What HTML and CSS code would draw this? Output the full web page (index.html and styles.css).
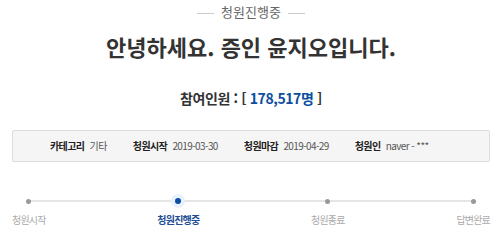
FILE: index.html
```html
<!DOCTYPE html>
<html lang="ko">
<head>
  <meta charset="UTF-8" />
  <meta name="viewport" content="width=device-width, initial-scale=1.0"/>
  <title>청원진행중</title>
  <link rel="stylesheet" href="styles.css">
</head>
<body>
  <div class="petition">
    <p class="status">청원진행중</p>
    <h1 class="title">안녕하세요. 증인 윤지오입니다.</h1>
    <p class="count">참여인원 : [ <span class="count-num">178,517명</span> ]</p>

    <ul class="info">
      <li><strong>카테고리</strong> 기타</li>
      <li><strong>청원시작</strong> 2019-03-30</li>
      <li><strong>청원마감</strong> 2019-04-29</li>
      <li><strong>청원인</strong> naver - ***</li>
    </ul>

    <ol class="steps">
      <li class="step"><span class="dot"></span><span class="step-name">청원시작</span></li>
      <li class="step active"><span class="dot"></span><span class="step-name">청원진행중</span></li>
      <li class="step"><span class="dot"></span><span class="step-name">청원종료</span></li>
      <li class="step"><span class="dot"></span><span class="step-name">답변완료</span></li>
    </ol>
  </div>
</body>
</html>
```

FILE: styles.css
```css
body {
  margin: 0;
  padding: 0;
  background: #ffffff;
  color: #333333;
  font-family: "Noto Sans CJK KR", "Noto Sans", sans-serif;
}

.petition {
  padding: 0 10px 0 12px;
}

.status {
  margin: 0;
  height: 24px;
  line-height: 24px;
  font-size: 13px;
  color: #666666;
  text-align: center;
}

.status::before,
.status::after {
  content: "";
  display: inline-block;
  width: 17px;
  height: 1px;
  background: #cccccc;
  vertical-align: middle;
  margin: 0 7px;
}

.title {
  margin: 5px 0 0;
  line-height: 34px;
  font-size: 22px;
  font-weight: bold;
  color: #333333;
  text-align: center;
}

.count {
  margin: 23px 0 0;
  line-height: 24px;
  font-size: 14px;
  letter-spacing: -0.4px;
  font-weight: bold;
  color: #333333;
  text-align: center;
}

.count-num {
  color: #0d4ea0;
}

.info {
  list-style: none;
  margin: 20px 0 0;
  padding: 0 0 0 37px;
  display: flex;
  gap: 26px;
  height: 30px;
  line-height: 30px;
  background: #f5f5f5;
  border: 1px solid #dddddd;
  border-radius: 2px;
  font-size: 10px;
  letter-spacing: -0.6px;
  color: #555555;
}

.info li {
  flex-shrink: 0;
  white-space: nowrap;
}

.info strong {
  color: #222222;
  margin-right: 3px;
}

.steps {
  list-style: none;
  margin: 28px 0 0;
  padding: 0;
  display: flex;
  justify-content: space-between;
  position: relative;
}

.steps::before {
  content: "";
  position: absolute;
  top: 10px;
  left: 16px;
  right: 16px;
  height: 2px;
  background: #e5e5e5;
}

.step {
  display: flex;
  flex-direction: column;
  align-items: center;
  position: relative;
}

.dot {
  width: 22px;
  height: 22px;
  display: flex;
  align-items: center;
  justify-content: center;
}

.dot::after {
  content: "";
  width: 5px;
  height: 5px;
  border-radius: 50%;
  background: #999999;
}

.step.active .dot::before {
  content: "";
  position: absolute;
  width: 14px;
  height: 14px;
  border-radius: 50%;
  background: #e8f1fc;
}

.step.active .dot::after {
  position: relative;
  width: 6px;
  height: 6px;
  background: #0b4ea2;
}

.step-name {
  line-height: 16px;
  font-size: 10px;
  letter-spacing: -0.8px;
  white-space: nowrap;
  color: #aaaaaa;
}

.step.active .step-name {
  color: #1d4e94;
  font-weight: bold;
}
```
